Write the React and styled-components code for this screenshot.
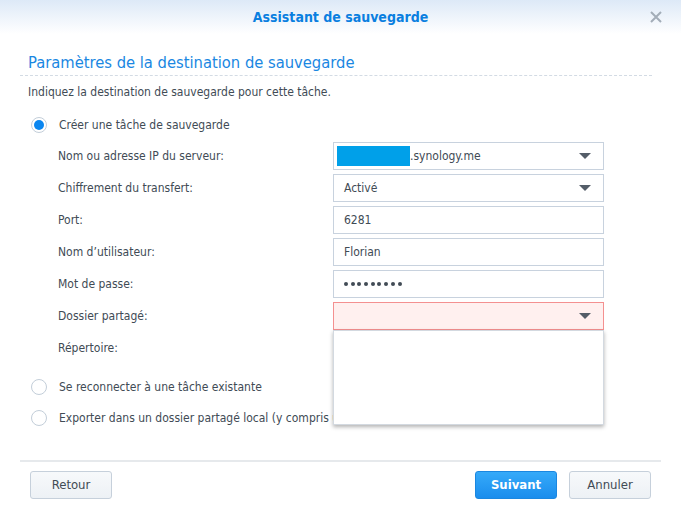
import React from "react";
import styled, { createGlobalStyle } from "styled-components";

const Global = createGlobalStyle`
  html, body { margin: 0; padding: 0; background: #fff; }
  body {
    font-family: "DejaVu Sans Condensed", "DejaVu Sans", sans-serif;
    font-stretch: condensed;
    font-size: 12px;
    color: #414b55;
  }
`;

const Window = styled.div`
  width: 681px;
  height: 507px;
  display: flex;
  flex-direction: column;
  background: #fff;
  overflow: hidden;
`;

const Header = styled.div`
  height: 34px;
  flex: none;
  display: flex;
  align-items: center;
  justify-content: center;
  position: relative;
  background: linear-gradient(#dde9f7, #ffffff);
`;

const Title = styled.div`
  font-weight: bold;
  font-size: 14px;
  color: #0a7fe0;
`;

const Close = styled.div`
  position: absolute;
  right: 18px;
  top: 10px;
  width: 14px;
  height: 14px;
`;

const Body = styled.div`
  flex: 1;
  padding: 18px 29px 0 20px;
  display: flex;
  flex-direction: column;
  position: relative;
`;

const SectionTitle = styled.div`
  font-size: 16.4px;
  color: #1a87e2;
  padding: 0 0 1px 8px;
  border-bottom: 1px dashed #d3dbe4;
  line-height: 22px;
`;

const Desc = styled.div`
  padding: 7px 0 0 8px;
  line-height: 18px;
`;

const RadioRow = styled.div`
  display: flex;
  align-items: center;
  gap: 12px;
  padding-left: 11px;
  height: ${(p) => p.$h || 32}px;
`;

const Radio = styled.span`
  width: 14px;
  height: 14px;
  border-radius: 50%;
  border: 1px solid #c3ced9;
  background: #fff;
  box-sizing: content-box;
  display: flex;
  align-items: center;
  justify-content: center;
  &::after {
    content: "";
    display: ${(p) => (p.$on ? "block" : "none")};
    width: 10px;
    height: 10px;
    border-radius: 50%;
    background: #0a86f0;
  }
`;

const Form = styled.div`
  display: flex;
  flex-direction: column;
  gap: 4px;
  padding-left: 38px;
`;

const Row = styled.div`
  display: grid;
  grid-template-columns: 275px 271px;
  align-items: center;
  height: 28px;
`;

const Field = styled.div`
  height: 28px;
  box-sizing: border-box;
  border: 1px solid ${(p) => (p.$error ? "#f49090" : "#c8d2de")};
  background: ${(p) => (p.$error ? "#fff0ef" : "#fff")};
  display: flex;
  align-items: center;
  padding: 0 12px 0 10px;
  position: relative;
`;

const Value = styled.span`
  flex: 1;
  color: #414b55;
  display: flex;
  align-items: center;
`;

const Redact = styled.span`
  display: inline-block;
  width: 73px;
  height: 20px;
  background: #00a0e9;
  margin-left: -7px;
`;

const Caret = styled.span`
  width: 0;
  height: 0;
  border-left: 6px solid transparent;
  border-right: 6px solid transparent;
  border-top: 6px solid #545d68;
`;

const Dots = styled.span`
  display: flex;
  gap: 2.7px;
  & > i {
    width: 4px;
    height: 4px;
    border-radius: 50%;
    background: #414b55;
  }
`;

const Menu = styled.div`
  position: absolute;
  left: -1px;
  top: 27px;
  width: 269px;
  height: 93px;
  background: #fff;
  border: 1px solid #d3d9e0;
  box-shadow: 0 2px 4px rgba(0, 0, 0, 0.3);
  z-index: 5;
`;

const Others = styled.div`
  margin-top: 9px;
  display: flex;
  flex-direction: column;
`;

const Footer = styled.div`
  flex: none;
  margin: 0 20px;
  border-top: 2px solid #e6e9ec;
  height: 45px;
  display: flex;
  align-items: center;
  padding: 0 10px;
  gap: 12px;
`;

const Spacer = styled.div`
  flex: 1;
`;

const Button = styled.button`
  width: 82px;
  height: 28px;
  font-family: inherit;
  font-stretch: condensed;
  font-size: 13px;
  border-radius: 3px;
  border: 1px solid ${(p) => (p.$primary ? "#1b87e0" : "#c6d0db")};
  background: ${(p) =>
    p.$primary ? "linear-gradient(#36aaf9, #1a8ded)" : "linear-gradient(#f7f9fb, #edf1f5)"};
  color: ${(p) => (p.$primary ? "#fff" : "#414b55")};
  font-weight: ${(p) => (p.$primary ? "bold" : "normal")};
  padding: 0;
`;

const fields = [
  { label: "Nom ou adresse IP du serveur:", kind: "host" },
  { label: "Chiffrement du transfert:", value: "Activé", select: true },
  { label: "Port:", value: "6281" },
  { label: "Nom d’utilisateur:", value: "Florian" },
  { label: "Mot de passe:", kind: "pwd" },
  { label: "Dossier partagé:", kind: "share" },
];

export default function App() {
  return (
    <Window>
      <Global />
      <Header>
        <Title>Assistant de sauvegarde</Title>
        <Close>
          <svg width="14" height="14" viewBox="0 0 14 14">
            <path d="M2 2L12 12M12 2L2 12" stroke="#a3adb8" strokeWidth="2" />
          </svg>
        </Close>
      </Header>
      <Body>
        <SectionTitle>Paramètres de la destination de sauvegarde</SectionTitle>
        <Desc>Indiquez la destination de sauvegarde pour cette tâche.</Desc>
        <RadioRow $h={34} style={{ marginTop: 7 }}>
          <Radio $on />
          <span>Créer une tâche de sauvegarde</span>
        </RadioRow>
        <Form>
          {fields.map((f) => (
            <Row key={f.label}>
              <span>{f.label}</span>
              {f.kind === "host" && (
                <Field>
                  <Value>
                    <Redact />
                    .synology.me
                  </Value>
                  <Caret />
                </Field>
              )}
              {f.kind === "pwd" && (
                <Field>
                  <Value>
                    <Dots>
                      {Array.from({ length: 9 }, (_, i) => (
                        <i key={i} />
                      ))}
                    </Dots>
                  </Value>
                </Field>
              )}
              {f.kind === "share" && (
                <Field $error>
                  <Value />
                  <Caret />
                  <Menu />
                </Field>
              )}
              {!f.kind && (
                <Field>
                  <Value>{f.value}</Value>
                  {f.select && <Caret />}
                </Field>
              )}
            </Row>
          ))}
          <Row>
            <span>Répertoire:</span>
          </Row>
        </Form>
        <Others>
          <RadioRow $h={32}>
            <Radio />
            <span>Se reconnecter à une tâche existante</span>
          </RadioRow>
          <RadioRow $h={30}>
            <Radio />
            <span>Exporter dans un dossier partagé local (y compris un périphérique USB externe)</span>
          </RadioRow>
        </Others>
      </Body>
      <Footer>
        <Button>Retour</Button>
        <Spacer />
        <Button $primary>Suivant</Button>
        <Button>Annuler</Button>
      </Footer>
    </Window>
  );
}
